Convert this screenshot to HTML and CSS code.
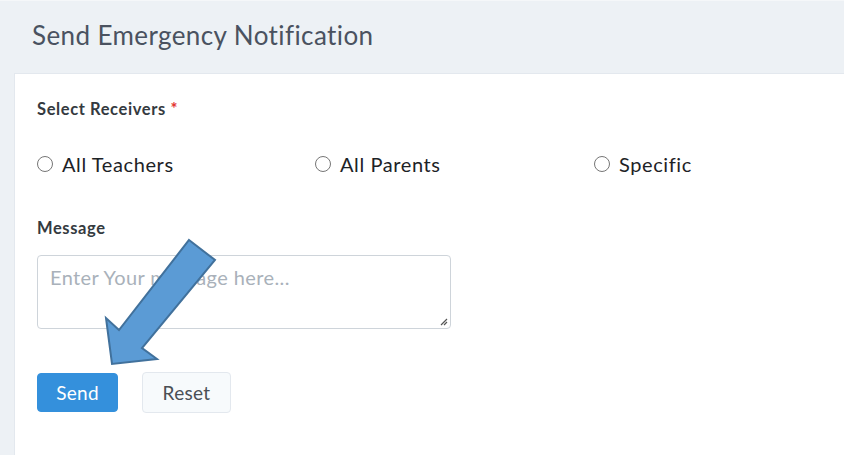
FILE: index.html
```html
<!DOCTYPE html>
<html lang="en">
<head>
<meta charset="utf-8">
<title>Send Emergency Notification</title>
<link rel="stylesheet" href="styles.css">
</head>
<body>
<div class="page">
  <header class="page-header">
    <h1 class="page-title">Send Emergency Notification</h1>
  </header>
  <main class="card">
    <form class="form">
      <div class="field">
        <div class="label">Select Receivers <span class="req">*</span></div>
        <div class="radios">
          <label class="radio"><span class="circle"></span>All Teachers</label>
          <label class="radio"><span class="circle"></span>All Parents</label>
          <label class="radio"><span class="circle"></span>Specific</label>
        </div>
      </div>
      <div class="field msg-field">
        <div class="label">Message</div>
        <div class="textarea">
          <span class="placeholder">Enter Your message here...</span>
          <svg class="grip" width="10" height="10" viewBox="0 0 10 10"><path d="M9 3 L3 9 M9 6 L6 9" stroke="#555" stroke-width="1.2" fill="none"/></svg>
        </div>
      </div>
      <div class="actions">
        <button type="button" class="btn btn-primary">Send</button>
        <button type="button" class="btn btn-light">Reset</button>
      </div>
    </form>
  </main>
  <svg class="arrow" width="844" height="455" viewBox="0 0 844 455">
    <polygon points="189,239 215,259 142,347 157,358 112,363 106,317 119,329" fill="#5b9bd5" stroke="#41719c" stroke-width="2" stroke-linejoin="miter"/>
  </svg>
</div>
</body>
</html>
```

FILE: styles.css
```css
html, body {
  margin: 0;
  padding: 0;
}
body {
  background: #edf1f5;
  font-family: "Lato", "Noto Sans", sans-serif;
  color: #212529;
  width: 844px;
  height: 455px;
  overflow: hidden;
}
.page {
  position: relative;
  height: 455px;
  border-top: 1px solid #f5f7f9;
  box-sizing: border-box;
}
.page-header {
  height: 72px;
  padding-left: 32px;
  display: flex;
  align-items: flex-start;
  box-sizing: border-box;
}
.page-title {
  margin: 18px 0 0 0;
  font-size: 26px;
  letter-spacing: 0.4px;
  font-weight: 400;
  color: #4a5260;
  line-height: 32px;
}
.card {
  margin-left: 14px;
  background: #ffffff;
  border-top: 1px solid #e3e8ee;
  border-left: 1px solid #e3e8ee;
  height: 382px;
  box-sizing: border-box;
  padding: 25px 0 0 22px;
}
.form {
  display: flex;
  flex-direction: column;
}
.label {
  font-size: 16.5px;
  letter-spacing: 0.6px;
  font-weight: 700;
  color: #343a40;
  line-height: 20px;
}
.req {
  color: #e3342f;
}
.radios {
  display: grid;
  grid-template-columns: 278px 279px 200px;
  margin-top: 32px;
}
.radio {
  display: flex;
  align-items: center;
  gap: 9px;
  font-size: 20px;
  letter-spacing: 0.6px;
  line-height: 26px;
  color: #1d2226;
}
.circle {
  width: 14px;
  height: 14px;
  border: 1.5px solid #767676;
  border-radius: 50%;
  box-sizing: content-box;
  flex: none;
}
.msg-field {
  margin-top: 41px;
}
.textarea {
  position: relative;
  margin-top: 17px;
  width: 414px;
  height: 74px;
  border: 1px solid #ced4da;
  border-radius: 4px;
  box-sizing: border-box;
  padding: 7px 12px;
}
.placeholder {
  font-size: 20px;
  letter-spacing: 0.4px;
  color: #a9b1ba;
  line-height: 28px;
}
.grip {
  position: absolute;
  right: 2px;
  bottom: 2px;
}
.actions {
  display: flex;
  gap: 24px;
  margin-top: 43px;
  align-items: center;
}
.btn {
  font-family: inherit;
  font-size: 19px;
  letter-spacing: 0.3px;
  border-radius: 4px;
  cursor: pointer;
  box-sizing: border-box;
}
.btn-primary {
  width: 81px;
  height: 39px;
  background: #3490dc;
  color: #ffffff;
  border: 1px solid #3490dc;
}
.btn-light {
  width: 89px;
  height: 41px;
  background: #f7fafc;
  color: #4a4f55;
  border: 1px solid #e3e8ee;
}
.arrow {
  position: absolute;
  left: 0;
  top: 0;
  pointer-events: none;
}
```
